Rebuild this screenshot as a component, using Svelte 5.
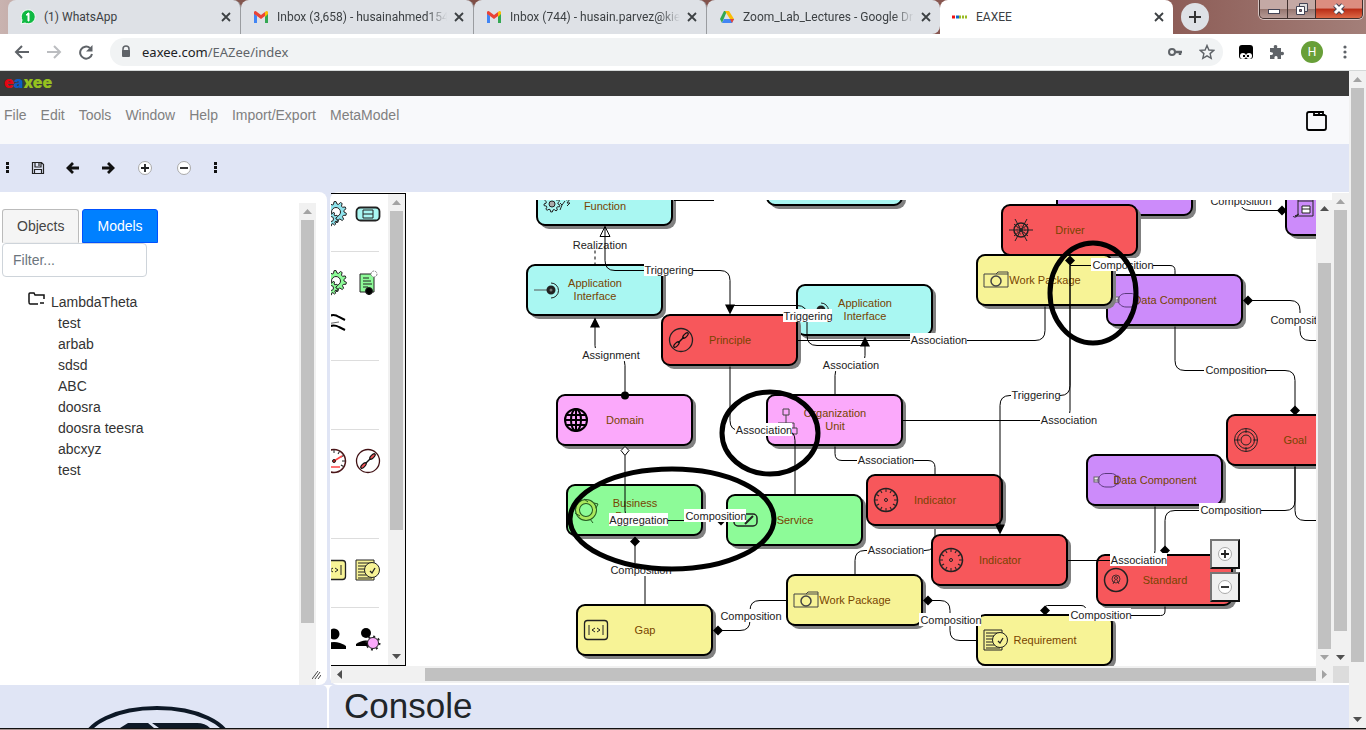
<script>
  const tabs = [
    { title: '(1) WhatsApp', icon: 'whatsapp' },
    { title: 'Inbox (3,658) - husainahmed154', icon: 'gmail' },
    { title: 'Inbox (744) - husain.parvez@kie', icon: 'gmail' },
    { title: 'Zoom_Lab_Lectures - Google Dr', icon: 'drive' },
    { title: 'EAXEE', icon: 'eaxee', active: true }
  ];
  const menus = ['File', 'Edit', 'Tools', 'Window', 'Help', 'Import/Export', 'MetaModel'];
  const models = ['test', 'arbab', 'sdsd', 'ABC', 'doosra', 'doosra teesra', 'abcxyz', 'test'];
  const paletteGroups = [
    { height: 58, rows: [['gearsBlue', 'screen']] },
    { height: 109, rows: [['gearsGreen', 'contract'], ['waves', '']] },
    { height: 69, rows: [] },
    { height: 109, rows: [['gauge', 'principleRed']] },
    { height: 69, rows: [['gapYellow', 'requirementYellow']] },
    { height: 56, rows: [['person', 'personGear']] }
  ];

  const cyan = '#a9f7f2', red = '#f7575b', yellow = '#f7f396', green = '#8dfb98', pink = '#fba9fb', purple = '#cc8bfa';
  const nodes = [
    { x: 605, y: 200, fill: cyan, lines: ['Application', 'Function'], icon: 'gears' },
    { x: 835, y: 180, fill: cyan, lines: [] },
    { x: 595, y: 290, fill: cyan, lines: ['Application', 'Interface'], icon: 'interface' },
    { x: 865, y: 310, fill: cyan, lines: ['Application', 'Interface'], icon: 'interface' },
    { x: 730, y: 340, fill: red, lines: ['Principle'], icon: 'principle' },
    { x: 1125, y: 190, fill: purple, lines: [] },
    { x: 1354, y: 210, fill: purple, lines: [], icon: 'scroll' },
    { x: 1070, y: 230, fill: red, lines: ['Driver'], icon: 'wheel' },
    { x: 1175, y: 300, fill: purple, lines: ['Data Component'], icon: 'plug' },
    { x: 1045, y: 280, fill: yellow, lines: ['Work Package'], icon: 'package' },
    { x: 625, y: 420, fill: pink, lines: ['Domain'], icon: 'globe' },
    { x: 835, y: 420, fill: pink, lines: ['Organization', 'Unit'], icon: 'org' },
    { x: 635, y: 510, fill: green, lines: ['Business', 'Process'], icon: 'cycle' },
    { x: 795, y: 520, fill: green, lines: ['Service'], icon: 'service' },
    { x: 935, y: 500, fill: red, lines: ['Indicator'], icon: 'dial' },
    { x: 1000, y: 560, fill: red, lines: ['Indicator'], icon: 'dial' },
    { x: 1165, y: 580, fill: red, lines: ['Standard'], icon: 'standard' },
    { x: 1155, y: 480, fill: purple, lines: ['Data Component'], icon: 'plug' },
    { x: 1295, y: 440, fill: red, lines: ['Goal'], icon: 'target' },
    { x: 855, y: 600, fill: yellow, lines: ['Work Package'], icon: 'package' },
    { x: 645, y: 630, fill: yellow, lines: ['Gap'], icon: 'gap' },
    { x: 1045, y: 640, fill: yellow, lines: ['Requirement'], icon: 'requirement' }
  ];
  const backEdges = [
    [[935, 526], [935, 550], [855, 550], [855, 575]]
  ];
  const edges = [
    [[605, 226], [605, 270], [730, 270], [730, 308]],
    [[674, 200], [714, 200]],
    [[730, 305], [807, 305], [807, 345], [865, 345]],
    [[865, 338], [865, 365], [835, 365], [835, 395]],
    [[798, 340], [1045, 340], [1045, 306]],
    [[595, 318], [595, 355], [625, 355], [625, 395]],
    [[625, 455], [625, 520], [725, 520]],
    [[635, 540], [635, 570], [645, 570], [645, 604]],
    [[730, 366], [730, 430], [795, 430], [795, 494]],
    [[903, 420], [1070, 420], [1070, 260]],
    [[1070, 265], [1070, 395], [1000, 395], [1000, 528]],
    [[1070, 265], [1175, 265], [1175, 275]],
    [[1175, 326], [1175, 370], [1295, 370], [1295, 410]],
    [[1248, 300], [1300, 300], [1300, 340], [1330, 340]],
    [[1240, 190], [1240, 210], [1282, 210]],
    [[1295, 466], [1295, 510], [1165, 510], [1165, 550]],
    [[1295, 466], [1295, 520], [1330, 520]],
    [[1155, 506], [1155, 560], [1068, 560]],
    [[835, 446], [835, 460], [935, 460], [935, 474]],
    [[928, 600], [950, 600], [950, 640], [977, 640]],
    [[718, 630], [750, 630], [750, 600], [787, 600]],
    [[1165, 606], [1165, 615], [1086, 615], [1086, 605], [1045, 605], [1045, 610]]
  ];
  const diamonds = [[635, 541], [721, 520], [1070, 260], [1295, 410], [1248, 300], [1282, 210], [1165, 550], [928, 600], [718, 630], [1045, 610]];
  const downArrows = [[730, 314], [1000, 534]];
  const upArrows = [[865, 336], [595, 317]];
  const widths = { Triggering: 49, Assignment: 58, Association: 57, Composition: 62, Aggregation: 59 };
  const labels = [
    ['Triggering', 668, 270], ['Triggering', 807, 316], ['Association', 850, 365], ['Association', 938, 340],
    ['Assignment', 610, 355], ['Composition', 715, 516], ['Aggregation', 638, 520], ['Composition', 640, 570],
    ['Association', 763, 430], ['Association', 1068, 420], ['Triggering', 1035, 395], ['Composition', 1122, 265],
    ['Composition', 1235, 370], ['Composition', 1300, 320], ['Composition', 1240, 201], ['Composition', 1230, 510],
    ['Association', 1138, 560], ['Association', 885, 460], ['Association', 895, 550], ['Composition', 950, 620],
    ['Composition', 750, 616], ['Composition', 1100, 615]
  ];
  const circled = [[1093, 293, 43, 50], [770, 433, 48, 41], [672, 519, 102, 50]];
  const spokes = [0, 30, 60, 90, 120, 150, 180, 210, 240, 270, 300, 330];

  // Polyline with corners rounded to a radius of at most 10.
  function route(points) {
    let d = `M${points[0][0]} ${points[0][1]}`;
    for (let i = 1; i < points.length - 1; i++) {
      const [p, c, n] = [points[i - 1], points[i], points[i + 1]];
      const before = Math.hypot(c[0] - p[0], c[1] - p[1]);
      const after = Math.hypot(n[0] - c[0], n[1] - c[1]);
      const r = Math.min(10, before / 2, after / 2);
      d += `L${c[0] + ((p[0] - c[0]) / before) * r} ${c[1] + ((p[1] - c[1]) / before) * r}`;
      d += `Q${c[0]} ${c[1]} ${c[0] + ((n[0] - c[0]) / after) * r} ${c[1] + ((n[1] - c[1]) / after) * r}`;
    }
    const end = points[points.length - 1];
    return d + `L${end[0]} ${end[1]}`;
  }

  // Outline of a cog wheel: four points for each tooth.
  function cog(cx, cy, inner, outer, teeth) {
    const points = [];
    for (let i = 0; i < teeth; i++) {
      for (const [offset, r] of [[0, inner], [0.2, outer], [0.5, outer], [0.7, inner]]) {
        const a = ((i + offset) / teeth) * Math.PI * 2;
        points.push(`${(cx + Math.cos(a) * r).toFixed(2)} ${(cy + Math.sin(a) * r).toFixed(2)}`);
      }
    }
    return `M${points.join('L')}Z`;
  }
  let filter = $state('');
</script>

{#snippet scrollbar(before, thumb, after, tone, horizontal = false, last = true)}
  <div class="scrollbar" class:horizontal aria-hidden="true">
    <svg class="arrow" viewBox="0 0 17 17"><path d={horizontal ? 'M11 4v9l-5-4.500z' : 'M4 11h9l-4.500-5z'} fill={tone[0]} /></svg>
    <div style="flex-grow:{before}"></div>
    <div class="thumb" style="flex-grow:{thumb}"></div>
    <div style="flex-grow:{after}"></div>
    {#if last}
      <svg class="arrow" viewBox="0 0 17 17"><path d={horizontal ? 'M6 4v9l5-4.500z' : 'M4 6h9l-4.500 5z'} fill={tone[1]} /></svg>
    {/if}
  </div>
{/snippet}

{#snippet plusMinus(plus)}
  <svg width="16" height="16" viewBox="0 0 16 16">
    <circle cx="8" cy="8" r="6.500" fill="#fff" stroke="#aaa" />
    <path d={plus ? 'M4 8h8M8 4v8' : 'M4 8h8'} stroke="#222" stroke-width="1.800" />
  </svg>
{/snippet}

{#snippet glyph(kind)}
  <!-- Node glyphs are centred on the origin, about 24 units wide. -->
  <g fill="none" stroke="#222" stroke-width="1">
    {#if kind === 'gears'}
      <path d={cog(-4, 4, 6, 8, 9)} /><circle cx="-4" cy="4" r="3" fill="#aaa" />
      <path d="M4 3l2 2 3-4M6 5l-2 5M10 0l4-1-3 4 3 0-3 3" />
    {:else if kind === 'gearsBlue' || kind === 'gearsGreen'}
      {@const tint = kind === 'gearsGreen' ? green : '#8fe3ec'}
      <path d={cog(2, -2, 8, 10.5, 10)} fill={tint} /><circle cx="2" cy="-2" r="4.500" fill="#fff" />
      <path d={cog(-3, 5, 5, 7, 9)} fill={tint} /><circle cx="-3" cy="5" r="2.500" fill="#fff" />
    {:else if kind === 'interface'}
      <path d="M-12 0h13" stroke="#555" /><circle cx="5" cy="0" r="3" stroke-width="3" fill="#777" /><path d="M5 -7a7 7 0 0 1 0 15" />
    {:else if kind === 'principle' || kind === 'principleRed'}
      <circle r="11.500" stroke={kind === 'principleRed' ? '#401013' : '#222'} stroke-width="1.300" />
      <path d="M-3 3l6-6" stroke="#111" stroke-width="1.500" />
      <ellipse cx="4.500" cy="-4.500" rx="3.500" ry="1.500" transform="rotate(-45 4.5 -4.5)" fill={kind === 'principleRed' ? red : 'none'} stroke="#111" stroke-width="1.200" />
      <ellipse cx="-4.500" cy="4.500" rx="3.500" ry="1.500" transform="rotate(-45 -4.5 4.5)" fill={kind === 'principleRed' ? red : 'none'} stroke="#111" stroke-width="1.200" />
    {:else if kind === 'wheel'}
      <circle r="7" stroke-width="1.500" /><circle r="4" stroke-dasharray="1 1" /><circle r="1.500" fill="#aaa" />
      <path d="M-12 0h24M-6 -11l12 22M6 -11l-12 22M-7 -6l14 12M7 -6l-14 12" />
    {:else if kind === 'plug'}
      <rect x="-12" y="-3" width="5" height="5" fill="#eee" stroke="#666" /><path d="M-12 0h5" stroke="#666" />
      <path d="M-8 -1c2-4 4-5.500 8-5.500h5c4 0 7 3 7 6.500s-3 7-7 7h-5c-4 0-8-3-8-7z" stroke="#5a3a7c" /><rect x="9" y="-4" width="3" height="8" stroke="#5a3a7c" />
    {:else if kind === 'package'}
      <path d="M-12 -6h12l2-2h10v15h-24zM0 -6h12" stroke="#444" /><circle cx="0" cy="1" r="5" stroke="#444" stroke-width="1.500" />
    {:else if kind === 'globe'}
      <g stroke="#000" stroke-width="2"><circle r="11" /><ellipse rx="5" ry="11" /><path d="M0 -11v22M-11 0h22M-9 -5h18M-9 5h18" /></g>
    {:else if kind === 'org'}
      <path d="M-3 -11h6v6h-6zM0 -5v8M-8 10v-7h16v5M-12 10h6v5h-6zM5 8h6v6h-6z" stroke="#444" />
    {:else if kind === 'cycle'}
      <circle r="8.500" stroke="#265a20" stroke-width="5" /><circle r="8.500" stroke="#a9e85d" stroke-width="3" />
      <path d="M-11 3l5 3M4 9l3 4M8 -7l4 1-2 4M-2 -11l4 3" stroke="#265a20" />
    {:else if kind === 'service'}
      <rect x="-12" y="-6" width="23" height="12" rx="4" stroke-width="1.500" /><path d="M-1 4l8-8" stroke-width="2" />
    {:else if kind === 'dial'}
      <circle r="11.500" stroke-width="1.500" /><circle r="1.500" />
      {#each spokes as a}<path d="M0 -11v3" transform="rotate({a})" />{/each}
    {:else if kind === 'standard'}
      <circle r="11.500" stroke-width="1.500" /><circle cy="-1" r="4" stroke-width=".8" /><circle cy="-2" r="1.500" stroke-width=".8" /><path d="M-1 0l-2 4M1 0l2 4" stroke-width=".8" />
    {:else if kind === 'target'}
      <circle r="11.500" /><circle r="8.500" /><circle r="5" /><path d="M-11 0h5M7 0h4M0 -11v4M0 7v4" />
    {:else if kind === 'gap' || kind === 'gapYellow'}
      <rect x="-11.500" y="-9.500" width="23" height="19" rx="3" stroke-width="1.300" fill={kind === 'gapYellow' ? yellow : 'none'} />
      <path d="M-7 -5v10M7 -5v10M-1 -2l-3 2 3 2M1 -2l3 2-3 2" />
    {:else if kind === 'requirement' || kind === 'requirementYellow'}
      <path d="M-12 -10h18v20h-18z" fill={kind === 'requirementYellow' ? yellow : 'none'} />
      <path d="M-10 -7h14M-10 -4h10M-10 -1h8M-10 2h8M-10 5h10M-10 8h14" />
      <circle cx="4" cy="0" r="7.500" fill={yellow} /><path d="M2 1l2 2 3-5" stroke-width="1.300" />
    {:else if kind === 'scroll'}
      <path d="M-10 6h18v-19h-15v17c0 3-4 4-5 2M-10 6l4-2" /><path d="M-3 -4h8v7h-8zM-3 -1h8" fill="#fff" /><path d="M-7 -9h15" />
    {:else if kind === 'screen'}
      <rect x="-11.500" y="-6.500" width="23" height="13" rx="4" fill={cyan} stroke-width="1.800" /><path d="M-5 -4h10v8h-10zM-5 0h10" />
    {:else if kind === 'contract'}
      <path d="M-8 -9h14v18h-14z" fill={green} /><path d="M-5 -5h6M-5 -2h8M-5 1h9M-5 4h5" />
      <circle cx="6" cy="-9" r="3" fill="#fff" stroke="#888" stroke-dasharray="2 1" /><circle cx="1" cy="8" r="3.500" fill="#000" /><path d="M1 8v4" stroke="#000" />
    {:else if kind === 'waves'}
      <path d="M-11 -3q9-8 16-3l6 3M-11 7q9-7 16-3l6 3" stroke="#000" stroke-width="2" /><path d="M-8 1l13-2" stroke="#666" />
    {:else if kind === 'gauge'}
      <circle r="11.500" stroke="#4b1518" stroke-width="1.500" />
      {#each spokes.slice(0, 5) as a}<path d="M0 -11v3" transform="rotate({a})" />{/each}
      <path d="M0 0l8-5M-4 6h10" stroke="#f44" stroke-width="1.500" /><circle r="1.500" fill="#c22" />
    {:else if kind === 'person'}
      <g fill="#000" stroke="none"><circle cy="-5" r="5.500" /><path d="M-12 10v-3q12-8 24 0v3z" /></g>
    {:else if kind === 'personGear'}
      <g fill="#000" stroke="none"><circle cx="-2" cy="-6" r="5" /><path d="M-12 7v-2q10-7 18 0v2z" /></g>
      <circle cx="5" cy="4" r="6.500" stroke-width="2" stroke-dasharray="2 3" /><circle cx="5" cy="4" r="5.500" fill={pink} />
    {/if}
  </g>
{/snippet}

<div class="window">
  <header class="tabstrip">
    {#each tabs as tab}
      <div class="tab" class:active={tab.active}>
        <svg class="favicon" viewBox="0 0 16 16">
          {#if tab.icon === 'whatsapp'}
            <path d="M1 15l1-4a7 7 0 1 1 3 3z" fill="#11b943" stroke="#fff" /><path d="M6 6l2-2h1v8H8V6z" fill="#fff" stroke="#fff" />
          {:else if tab.icon === 'gmail'}
            <path d="M1 4v10h3V7z" fill="#4285f4" /><path d="M12 7v7h3V4z" fill="#34a853" /><path d="M1 5V3q1-2 3 0l4 3 4-3v4l-4 3-4-3z" fill="#ea4335" /><path d="M12 3q2-2 3 0v2l-3 3z" fill="#fbbc04" />
          {:else if tab.icon === 'drive'}
            <path d="M5 2h3L3 14 1 10z" fill="#34a853" /><path d="M6 2h4l5 8h-4z" fill="#fbbc04" /><path d="M5 10h10l-2 4H3z" fill="#4285f4" /><path d="M11 10h4l-2 4z" fill="#ea4335" />
          {:else}
            <path d="M0 8h4" stroke="#e11" stroke-width="3" stroke-dasharray="3 1" /><path d="M4 8h3" stroke="#16c" stroke-width="3" /><path d="M7 8h9" stroke="#9b2" stroke-width="3" stroke-dasharray="2 1" />
          {/if}
        </svg>
        <span class="title">{tab.title}</span>
        <button class="plain close" aria-label="Close tab"><svg width="10" height="10" viewBox="0 0 10 10"><path d="M1 1l8 8M9 1L1 9" stroke="#3c4043" stroke-width="1.800" /></svg></button>
      </div>
    {/each}
    <button class="newtab" aria-label="New tab"><svg width="14" height="14" viewBox="0 0 14 14"><path d="M1 7h12M7 1v12" stroke="#333" stroke-width="2" /></svg></button>
    <div class="controls">
      <button aria-label="Minimize"><svg width="14" height="14" viewBox="0 0 14 14"><rect x="1.500" y="7.500" width="11" height="4" fill="#fff" stroke="#445" /></svg></button>
      <button aria-label="Restore"><svg width="14" height="14" viewBox="0 0 14 14"><path d="M4.500 1.500h8v8h-8z" fill="#ddd" stroke="#445" /><path d="M1.500 4.500h8v8h-8z" fill="#fff" stroke="#445" /><path d="M4.500 7.500h2v2h-2z" fill="#966" stroke="#445" /></svg></button>
      <button class="quit" aria-label="Close"><svg width="14" height="14" viewBox="0 0 14 14"><path d="M3 3l8 8M11 3l-8 8" stroke="#445" stroke-width="5" /><path d="M3 3l8 8M11 3l-8 8" stroke="#fff" stroke-width="3" /></svg></button>
    </div>
  </header>

  <div class="addressbar">
    <button class="plain" aria-label="Back"><svg width="16" height="16" viewBox="0 0 16 16"><path d="M15 8H2M8 2L2 8l6 6" fill="none" stroke="#5f6368" stroke-width="2" /></svg></button>
    <button class="plain" aria-label="Forward"><svg width="16" height="16" viewBox="0 0 16 16"><path d="M1 8h13M8 2l6 6-6 6" fill="none" stroke="#bbbdc0" stroke-width="2" /></svg></button>
    <button class="plain" aria-label="Reload"><svg width="16" height="16" viewBox="0 0 16 16"><path d="M14 10A6 6 0 1 1 12 4" fill="none" stroke="#5f6368" stroke-width="2" /><path d="M14.500 1v6.500H8z" fill="#5f6368" /></svg></button>
    <div class="url">
      <svg width="12" height="14" viewBox="0 0 12 14"><path d="M3 6V4a3 3 0 0 1 6 0v2" fill="none" stroke="#5f6368" stroke-width="1.500" /><rect x="2" y="5" width="8" height="7" rx="1" fill="#5f6368" /></svg>
      <span class="address"><b>eaxee.com</b>/EAZee/index</span>
      <svg width="16" height="16" viewBox="0 0 16 16"><circle cx="5" cy="8" r="3" fill="none" stroke="#5f6368" stroke-width="2" /><path d="M8 8h7M13 8v3" stroke="#5f6368" stroke-width="2.500" /></svg>
      <svg width="16" height="16" viewBox="0 0 16 16"><path d="M8 1.500l1.900 4.500 4.900.4-3.700 3.200 1.100 4.800L8 11.900l-4.200 2.500 1.100-4.800L1.200 6.400 6.100 6z" fill="none" stroke="#5f6368" stroke-width="1.400" /></svg>
    </div>
    <svg width="14" height="14" viewBox="0 0 14 14"><rect width="14" height="14" rx="3" /><circle cx="4" cy="11" r="3" fill="#fff" /><circle cx="10" cy="11" r="3" fill="#fff" /><path d="M4 10h2v2H4zM8 10h2v2H8z" /></svg>
    <svg width="16" height="16" viewBox="0 0 16 16"><path d="M1 4h4q-1-3 1.500-3T8 4h4v4q3-1 3 1.500T12 11v4H8.500q.5-3-1.500-3t-1.500 3H1v-4q3 0 3-1.500T1 8z" fill="#5f6368" /></svg>
    <span class="avatar">H</span>
    <svg width="4" height="16" viewBox="0 0 4 16" fill="#5f6368"><circle cx="2" cy="3" r="1.600" /><circle cx="2" cy="8" r="1.600" /><circle cx="2" cy="13" r="1.600" /></svg>
  </div>

  <div class="viewport">
    <div class="page">
      <div class="brand"><span class="r">e</span><span class="b">a</span><span class="g">xee</span></div>
      <nav class="menu">
        {#each menus as menu}<a href="#menu">{menu}</a>{/each}
        <button class="plain project" aria-label="Windows"><svg width="22" height="22" viewBox="0 0 22 22"><path d="M3 2h14v2l3 2v12q0 2-2 2H3q-2 0-2-2V4q0-2 2-2M8 2v3h11M13 2v3" fill="none" stroke="#000" stroke-width="1.800" /></svg></button>
      </nav>
      <div class="toolbar">
        <svg class="dots" width="4" height="12" viewBox="0 0 4 12"><path d="M0 0h3v3H0zM0 4h3v3H0zM0 8h3v3H0z" fill="#111" /></svg>
        <button class="plain" aria-label="Save"><svg width="14" height="14" viewBox="0 0 14 14"><path d="M1.500 1.500h9l2 2v9h-11zM4 1.500V6h6V2M3.500 12V8.500h7V12M8 2v3" fill="none" stroke="#222" stroke-width="1.200" /></svg></button>
        <button class="plain" aria-label="Undo"><svg width="14" height="14" viewBox="0 0 14 14"><path d="M13 7H3M7 2L2 7l5 5" fill="none" stroke="#111" stroke-width="2.800" /></svg></button>
        <button class="plain" aria-label="Redo"><svg width="14" height="14" viewBox="0 0 14 14"><path d="M1 7h10M7 2l5 5-5 5" fill="none" stroke="#111" stroke-width="2.800" /></svg></button>
        <button class="plain wide" aria-label="Zoom in">{@render plusMinus(true)}</button>
        <button class="plain wide" aria-label="Zoom out">{@render plusMinus(false)}</button>
        <svg class="dots" width="4" height="12" viewBox="0 0 4 12"><path d="M0 0h3v3H0zM0 4h3v3H0zM0 8h3v3H0z" fill="#111" /></svg>
      </div>

      <main class="work">
        <aside class="explorer">
          <div class="browse">
            <div class="switch">
              <button class="choice">Objects</button>
              <button class="choice on">Models</button>
            </div>
            <input type="text" placeholder="Filter..." aria-label="Filter" bind:value={filter} />
            <div class="root">
              <svg width="17" height="16" viewBox="0 0 17 16"><path d="M10 12H2Q1 12 1 10V2q0-1 1-1h4l1 2h9v4M12 11h4" fill="none" stroke="#111" stroke-width="1.500" /></svg>
              <span>LambdaTheta</span>
            </div>
            <ul>
              {#each models as model}<li>{model}</li>{/each}
            </ul>
          </div>
          <div class="explorer-bar">{@render scrollbar(0, 402, 62, ['#a3a3a3', '#555'], false, false)}</div>
          <svg class="grip" width="9" height="9" viewBox="0 0 9 9"><path d="M0 9l6-8M3 9l5-7M6 9l3-4" stroke="#444" /></svg>
        </aside>

        <section class="editor">
          <div class="editor-row">
            <div class="palette">
              <div class="shapes">
                {#each paletteGroups as group}
                  <div class="group" style="height:{group.height}px">
                    {#each group.rows as row}
                      <div class="pair">
                        {#each row as kind}
                          <svg width="26" height="28" viewBox="-13 -14 26 28">{#if kind}{@render glyph(kind)}{/if}</svg>
                        {/each}
                      </div>
                    {/each}
                  </div>
                {/each}
              </div>
              {@render scrollbar(0, 318, 118, ['#a3a3a3', '#505050'])}
            </div>
            <div class="canvas">
              <svg width="100%" height="100%" class="diagram" role="img" aria-label="Architecture model">
                <g transform="translate(-406 -199.500)">
                  {#each backEdges as edge}<path class="edge" d={route(edge)} />{/each}
                  <path class="edge" d="M595 250V264" stroke-dasharray="3 3" />
                </g>
                <g transform="translate(-406 -200)">
                  {#each nodes as node}
                    <rect x={node.x - 65} y={node.y - 23} width="136" height="52" rx="9" fill="#808080" />
                    <rect x={node.x - 68} y={node.y - 25} width="135" height="50" rx="8" fill={node.fill} stroke="#000" stroke-width="2" />
                    {#if node.icon}<g transform="translate({node.x - 49} {node.y})">{@render glyph(node.icon)}</g>{/if}
                    {#each node.lines as line, i}
                      <text class="name" x={node.x} y={node.y + 4 + (node.lines.length > 1 ? i * 13 - 7 : 0)}>{line}</text>
                    {/each}
                  {/each}
                  <text x="600" y="249">Realization</text>
                </g>
                <g transform="translate(-406 -199.500)">
                  {#each edges as edge}<path class="edge" d={route(edge)} />{/each}
                  {#each diamonds as [x, y]}<path d="M{x - 5} {y}l5-5 5 5-5 5z" />{/each}
                  {#each downArrows as [x, y]}<path d="M{x} {y}l-5-10h10z" />{/each}
                  {#each upArrows as [x, y]}<path d="M{x} {y}l-5 10h10z" />{/each}
                  <path d="M605 226l-5 10h10z" fill="none" stroke="#000" />
                  <path d="M625 446l-4 4 4 5 4-5z" fill="#fff" stroke="#000" />
                  <circle cx="625" cy="395" r="4" />
                </g>
                <g transform="translate(-405 -200)">
                  {#each labels as [label, x, y]}
                    <rect x={x - Math.floor(widths[label] / 2) - 1} y={y - 7} width={widths[label]} height="13" fill="#fff" />
                    <text {x} y={y + 4}>{label}</text>
                  {/each}
                </g>
                <g transform="translate(-406 -200)">
                  {#each circled as [x, y, rx, ry]}
                    <ellipse cx={x} cy={y} {rx} {ry} fill="none" stroke="#000" stroke-width="5" />
                  {/each}
                </g>
              </svg>
              <div class="zoom">
                <button aria-label="Zoom in">{@render plusMinus(true)}</button>
                <button aria-label="Zoom out">{@render plusMinus(false)}</button>
              </div>
            </div>
            <div class="inner-bar">{@render scrollbar(46, 389, 0, ['#505050', '#a3a3a3'])}</div>
            {@render scrollbar(0, 420, 18, ['#a3a3a3', '#505050'])}
          </div>
          <div class="editor-bottom">
            {@render scrollbar(77, 891, 0, ['#505050', '#a3a3a3'], true)}
            <div class="corner"></div>
          </div>
        </section>
      </main>

      <footer class="dock">
        <div class="emblem">
          <svg width="158" height="22" viewBox="0 0 158 22"><ellipse cx="79" cy="36" rx="72" ry="34" fill="none" stroke="#0d1826" stroke-width="4" /><path d="M42 22l8-5h20l6 5zM74 17h45q8 0 13 5H81z" fill="#0d1826" /></svg>
        </div>
        <section class="console"><h2>Console</h2></section>
      </footer>
    </div>
    <div class="page-bar">{@render scrollbar(0, 574, 49, ['#a3a3a3', '#505050'])}</div>
  </div>
  <div class="taskbar"></div>
</div>

<style>
  :global(body) { margin: 0; font-family: 'Liberation Sans', Arial, sans-serif; }
  * { box-sizing: border-box; }
  svg { display: block; flex: none; }
  .window { display: flex; flex-direction: column; min-height: 100vh; font-size: 14px; color: #333; overflow: hidden; }
  .plain { display: flex; align-items: center; justify-content: center; padding: 0; border: 0; background: none; }

  .tabstrip { display: flex; height: 34px; padding-left: 8px; background: linear-gradient(90deg, #c9b3b0, #7a4a42 20%, #8c5b55 85%, #a37f79); }
  .tab { display: flex; align-items: center; flex: 0 1 233px; min-width: 0; padding: 0 6px 0 12px; gap: 8px; background: #dee1e6; border-radius: 8px 8px 0 0; border-right: 1px solid #9a9ca0; font: 12px Roboto, 'Noto Sans', sans-serif; color: #3c4043; }
  .tab:nth-child(4) { border-right: 0; border-radius: 8px 8px 8px 0; }
  .tab.active { background: #fff; border-right: 0; }
  .favicon { width: 16px; height: 16px; }
  .title { flex: 1; overflow: hidden; white-space: nowrap; mask-image: linear-gradient(90deg, #000 88%, transparent); }
  .tab:first-child .title, .active .title { mask-image: none; }
  .close { width: 16px; height: 16px; margin-left: -4px; }
  .newtab { display: flex; align-items: center; justify-content: center; width: 28px; height: 28px; margin: 3px 8px; padding: 0; border: 0; border-radius: 14px; background: #dee1e6; }
  .controls { display: flex; height: 19px; margin-left: auto; margin-right: 3px; border: 1px solid #40302e; border-top: 0; border-radius: 0 0 5px 5px; overflow: hidden; box-shadow: 0 0 0 1px #d7c5c2; }
  .controls button { display: flex; align-items: center; justify-content: center; width: 28px; padding: 0; border: 0; border-right: 1px solid #40302e; background: linear-gradient(#c4a9a5 50%, #95756f 50%, #b79b96); }
  .controls .quit { width: 46px; border-right: 0; background: linear-gradient(#dc8d80 45%, #b92c16 50%, #dd6846); }

  .addressbar { display: flex; align-items: center; gap: 16px; height: 37px; padding: 0 19px 0 14px; background: #fff; border-bottom: 1px solid #d5d8d8; }
  .url { display: flex; align-items: center; flex: 1; gap: 16px; height: 28px; padding: 0 8px 0 10px; border-radius: 14px; background: #f1f3f4; font: 13px 'Noto Sans', sans-serif; color: #5f6368; }
  .address { flex: 1; margin-left: -6px; }
  .address b { font-weight: 400; color: #202124; }
  .avatar { width: 22px; height: 22px; margin-right: 4px; border-radius: 11px; background: #689f38; color: #fff; text-align: center; font: 12px/22px Roboto, sans-serif; }

  .viewport { display: flex; flex: 1; }
  .page { display: flex; flex: 1; flex-direction: column; min-width: 0; background: #fff; }
  .page-bar { display: flex; }
  .brand { height: 25px; padding-left: 4px; background: #3a3a3a; font: 900 16px/22px Inter, sans-serif; }
  .r { color: #e30613; } .b { color: #0b5cc4; } .g { color: #95c11f; }
  .menu { display: flex; align-items: center; gap: 14px; height: 48px; padding: 0 21px 10px 4px; background: #f8f9fb; }
  .menu a { color: #808080; text-decoration: none; }
  .project { margin: 12px 0 0 auto; }
  .toolbar { display: flex; align-items: center; gap: 21px; height: 48px; padding-left: 6px; background: #e0e5f5; }
  .wide { width: 18px; }

  .work { display: flex; flex: 1; gap: 3px; background: #e0e5f5; }
  .explorer { position: relative; display: flex; width: 327px; padding-top: 11px; padding-right: 11px; background: #fff; border-radius: 0 8px 8px 0; }
  .browse { flex: 1; padding: 6px 0 0 2px; }
  .switch { display: flex; gap: 3px; }
  .choice { height: 34px; padding: 0 14px; border: 1px solid #bbb; border-bottom-color: #eee; border-radius: 3px 3px 0 0; background: #f5f5f5; color: #444; font: 14px 'Liberation Sans', sans-serif; }
  .choice.on { border-color: #0051ff; background: #0080ff; color: #fff; }
  input { display: block; width: 145px; height: 34px; padding: 0 10px; border: 1px solid #ced4da; border-radius: 4px; font: 14px 'Liberation Sans', sans-serif; color: #495057; }
  input::placeholder { color: #6c757d; opacity: 1; }
  .root { display: flex; gap: 6px; margin: 15px 0 0 26px; line-height: 21px; }
  ul { margin: 0; padding: 0 0 0 56px; list-style: none; line-height: 21px; }
  .explorer-bar { display: flex; }
  .grip { position: absolute; right: 6px; bottom: 6px; }

  .scrollbar { display: flex; flex-direction: column; width: 17px; background: #f1f1f1; }
  .scrollbar .arrow { width: 17px; height: 17px; }
  .thumb { margin: 0 2px; background: #c1c1c1; }
  .scrollbar.horizontal { flex: 1; flex-direction: row; width: auto; height: 17px; }
  .horizontal .thumb { margin: 2px 0; }

  .editor { display: flex; flex: 1; flex-direction: column; min-width: 0; padding: 1px 0 2px 1px; background: #fff; border-radius: 8px 0 0 8px; }
  .editor-row { display: flex; flex: 1; }
  .palette { display: flex; width: 75px; border: 1px solid #000; border-left: 0; }
  .shapes { flex: 1; padding-right: 9px; overflow: hidden; }
  .group { padding-top: 6px; border-bottom: 1px solid #ddd; }
  .group:last-child { border-bottom: 0; padding-top: 17px; }
  .group:nth-child(2), .group:nth-child(4), .group:nth-child(5) { padding-top: 17px; }
  .pair { display: flex; justify-content: flex-end; gap: 8px; height: 40px; margin-right: -2px; }
  .canvas { position: relative; flex: 1; min-width: 0; min-height: 465px; margin-top: 7px; }
  .diagram { position: absolute; inset: 0; }
  .diagram text { font: 11px 'Liberation Sans', Arial, sans-serif; text-anchor: middle; fill: #222; }
  .diagram .name { fill: #774400; }
  .edge { fill: none; stroke: #000; }
  .zoom { position: absolute; right: 76px; bottom: 64px; display: grid; gap: 3px; }
  .zoom button { display: flex; align-items: center; justify-content: center; width: 30px; height: 30px; padding: 0; border: 2px solid; border-color: #767676 #111 #111 #767676; background: #efefef; }
  .inner-bar { display: flex; width: 16px; margin-top: 7px; }
  .editor-bottom { display: flex; }
  .corner { width: 16px; background: #dcdcdc; }

  .dock { display: flex; gap: 2px; height: 43px; background: #fff; }
  .emblem { display: flex; align-items: flex-end; justify-content: center; width: 327px; padding-right: 14px; background: #e0e5f5; border-radius: 0 5px 0 0; }
  .console { flex: 1; background: #e0e5f5; border-radius: 5px 0 0 0; overflow: hidden; }
  h2 { margin: 0; padding-left: 15px; font-size: 35px; font-weight: 400; line-height: 42px; color: #212529; }
  .taskbar { height: 2px; border-top: 1px solid #111; background: #a48f8c; }
</style>
